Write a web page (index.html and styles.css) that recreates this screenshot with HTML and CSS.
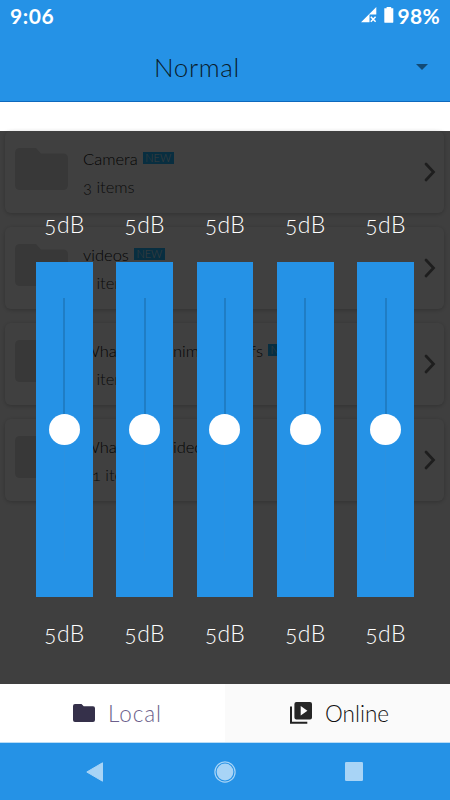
FILE: index.html
```html
<!DOCTYPE html>
<html lang="en">
<head>
  <meta charset="UTF-8">
  <title>Equalizer</title>
  <link rel="stylesheet" href="styles.css">
</head>
<body>
  <div class="screen">
    <header class="header">
      <div class="status-bar">
        <span class="clock">9:06</span>
        <svg class="signal" width="16" height="16" viewBox="0 0 16 16">
          <path d="M0 15.3L15.3 0V7.5H8.5V15.3Z" fill="#fff"/>
          <path d="M9.8 9.7L14.6 14.7M14.6 9.7L9.8 14.7" stroke="#fff" stroke-width="1.5"/>
        </svg>
        <svg class="battery" width="10" height="16" viewBox="0 0 10 16">
          <path d="M2.6 0H7.2V1.3H9.3V14.9Q9.3 15.8 8.4 15.8H1.2Q.3 15.8 .3 14.9V1.3H2.6Z" fill="#fff"/>
        </svg>
        <span class="percent">98%</span>
      </div>
      <div class="preset">
        <span class="preset-name">Normal</span>
        <span class="arrow-down"></span>
      </div>
    </header>

    <div class="strip"></div>

    <main class="content">
      <div class="folder-list">
        <div class="card">
          <svg class="folder" width="53" height="43" viewBox="0 0 53 43"><path d="M5 0H21L26 5.5H48Q53 5.5 53 10.5V37Q53 42 48 42H5Q0 42 0 37V5Q0 0 5 0Z"/></svg>
          <div class="info">
            <div class="title"><span class="name">Camera</span><span class="badge">NEW</span></div>
            <div class="count">3 items</div>
          </div>
          <svg class="chevron" width="12" height="20" viewBox="0 0 12 20"><path d="M2 2L9.5 10L2 18"/></svg>
        </div>
        <div class="card">
          <svg class="folder" width="53" height="43" viewBox="0 0 53 43"><path d="M5 0H21L26 5.5H48Q53 5.5 53 10.5V37Q53 42 48 42H5Q0 42 0 37V5Q0 0 5 0Z"/></svg>
          <div class="info">
            <div class="title"><span class="name">videos</span><span class="badge">NEW</span></div>
            <div class="count">1 items</div>
          </div>
          <svg class="chevron" width="12" height="20" viewBox="0 0 12 20"><path d="M2 2L9.5 10L2 18"/></svg>
        </div>
        <div class="card">
          <svg class="folder" width="53" height="43" viewBox="0 0 53 43"><path d="M5 0H21L26 5.5H48Q53 5.5 53 10.5V37Q53 42 48 42H5Q0 42 0 37V5Q0 0 5 0Z"/></svg>
          <div class="info">
            <div class="title"><span class="name">WhatsApp Animated Gifs</span><span class="badge">NEW</span></div>
            <div class="count">1 items</div>
          </div>
          <svg class="chevron" width="12" height="20" viewBox="0 0 12 20"><path d="M2 2L9.5 10L2 18"/></svg>
        </div>
        <div class="card">
          <svg class="folder" width="53" height="43" viewBox="0 0 53 43"><path d="M5 0H21L26 5.5H48Q53 5.5 53 10.5V37Q53 42 48 42H5Q0 42 0 37V5Q0 0 5 0Z"/></svg>
          <div class="info">
            <div class="title"><span class="name">WhatsApp Video</span><span class="badge">NEW</span></div>
            <div class="count">11 items</div>
          </div>
          <svg class="chevron" width="12" height="20" viewBox="0 0 12 20"><path d="M2 2L9.5 10L2 18"/></svg>
        </div>
      </div>

      <!-- equalizer over the folder list -->
      <div class="equalizer">
        <div class="band">
          <span class="db">5dB</span>
          <div class="slider"><div class="track"></div><div class="knob"></div><div class="track-low"></div></div>
          <span class="db">5dB</span>
        </div>
        <div class="band">
          <span class="db">5dB</span>
          <div class="slider"><div class="track"></div><div class="knob"></div><div class="track-low"></div></div>
          <span class="db">5dB</span>
        </div>
        <div class="band">
          <span class="db">5dB</span>
          <div class="slider"><div class="track"></div><div class="knob"></div><div class="track-low"></div></div>
          <span class="db">5dB</span>
        </div>
        <div class="band">
          <span class="db">5dB</span>
          <div class="slider"><div class="track"></div><div class="knob"></div><div class="track-low"></div></div>
          <span class="db">5dB</span>
        </div>
        <div class="band">
          <span class="db">5dB</span>
          <div class="slider"><div class="track"></div><div class="knob"></div><div class="track-low"></div></div>
          <span class="db">5dB</span>
        </div>
      </div>
    </main>

    <div class="tabs">
      <div class="tab tab-local">
        <svg width="22" height="18" viewBox="0 0 22 18"><path d="M2 0H8.5L10.7 2.2H20Q22 2.2 22 4.2V16Q22 18 20 18H2Q0 18 0 16V2Q0 0 2 0Z" fill="#35304a"/></svg>
        <span>Local</span>
      </div>
      <div class="tab tab-online">
        <svg width="22" height="22" viewBox="0 0 22 22">
          <path d="M1 4.5V20.8H17.3" fill="none" stroke="#222" stroke-width="2"/>
          <path d="M6.4 0H20Q22 0 22 2V15.4Q22 17.4 20 17.4H6.4Q4.4 17.4 4.4 15.4V2Q4.4 0 6.4 0ZM10.7 3.9V13.6L17.4 8.7Z" fill="#262626" fill-rule="evenodd"/>
        </svg>
        <span>Online</span>
      </div>
    </div>

    <nav class="nav-bar">
      <svg width="18" height="20" viewBox="0 0 18 20"><path d="M16.5 .8V19.2L.8 10Z" fill="#a8d4f6" stroke="#a8d4f6" stroke-linejoin="round"/></svg>
      <svg width="22" height="22" viewBox="0 0 22 22"><circle cx="11" cy="11" r="10.1" fill="none" stroke="#a8d4f6" stroke-width="1.2"/><circle cx="11" cy="11" r="8.4" fill="#a8d4f6"/></svg>
      <svg width="18" height="19" viewBox="0 0 18 19"><rect width="18" height="19" rx="1.3" fill="#a8d4f6"/></svg>
    </nav>
  </div>
</body>
</html>
```

FILE: styles.css
```css
* {
  box-sizing: border-box;
}

body {
  margin: 0;
  font-family: Lato, "Open Sans", sans-serif;
  font-weight: 300;
  font-variant-numeric: oldstyle-nums;
}

.screen {
  width: 450px;
  height: 800px;
  display: flex;
  flex-direction: column;
  overflow: hidden;
  background: #fff;
}

.header {
  height: 102px;
  background: #2592e6;
  border-bottom: 1px solid #0e69bd;
}

.status-bar {
  height: 32px;
  padding: 0 10px;
  display: flex;
  align-items: center;
  color: #fff;
  font-size: 21px;
  font-weight: 700;
  font-variant-numeric: lining-nums;
}

.clock {
  margin-right: auto;
  margin-bottom: 2px;
  letter-spacing: 0.6px;
}

.signal {
  margin: 0 7px 2px 0;
}

.battery {
  margin: 0 4px 3px 0;
}

.percent {
  margin-bottom: 2px;
  letter-spacing: 0.3px;
}

.preset {
  height: 69px;
  padding: 1px 22px 0 154px;
  display: flex;
  align-items: center;
  justify-content: space-between;
}

.preset-name {
  font-size: 26px;
  color: #0a1c2c;
  letter-spacing: 0.6px;
}

.arrow-down {
  border: 6px solid transparent;
  border-top-color: #124a75;
  border-bottom: 0;
}

.strip {
  height: 29px;
}

.content {
  position: relative;
  height: 553px;
  background: #fafafa;
}

.folder-list {
  padding: 0 6px 0 5px;
  display: flex;
  flex-direction: column;
  gap: 14px;
}

.card {
  height: 82px;
  padding: 0 8px 0 10px;
  display: flex;
  align-items: center;
  background: #fff;
  border-radius: 6px;
  box-shadow: 0 1px 4px rgba(0,0,0,0.22);
}

.folder {
  fill: #dedede;
  margin-bottom: 6px;
}

.info {
  flex: 1;
  margin-left: 15px;
  padding-top: 2px;
  font-size: 16.5px;
}

.title {
  display: flex;
  align-items: center;
  height: 29px;
  color: #111;
}

.badge {
  width: 31px;
  height: 12px;
  margin: 0 0 2px 5px;
  background: #20b8ff;
  color: #f0f0f0;
  font-size: 11px;
  line-height: 12px;
  text-align: center;
}

.count {
  height: 29px;
  line-height: 29px;
  color: #333;
}

.chevron {
  fill: none;
  stroke: #777;
  stroke-width: 2.8;
  stroke-linecap: round;
}

.equalizer {
  position: absolute;
  inset: 0;
  display: flex;
  gap: 23.5px;
  padding: 77px 36px 0;
  background: rgba(0,0,0,0.75);
}

.band {
  flex: 1;
  display: flex;
  flex-direction: column;
  align-items: center;
}

.db {
  height: 32px;
  line-height: 32px;
  font-size: 23px;
  letter-spacing: 0.4px;
  color: #fff;
}

.slider {
  width: 100%;
  height: 335px;
  margin: 22px 0 20px;
  padding-top: 36px;
  display: flex;
  flex-direction: column;
  align-items: center;
  background: #2592e6;
}

.track {
  width: 2px;
  height: 115.5px;
  background: #1f7dc5;
}

.knob {
  width: 31px;
  height: 31px;
  border-radius: 50%;
  background: #fff;
}

.track-low {
  width: 1px;
  height: 116px;
  background: #2b91e0;
}

.tabs {
  height: 59px;
  display: flex;
  border-bottom: 1px solid #b9dcf6;
}

.tab {
  width: 50%;
  display: flex;
  align-items: center;
  font-size: 22.5px;
}

.tab-local {
  padding-left: 73px;
  gap: 13px;
  color: #6c5f8c;
  letter-spacing: 0.9px;
}

.tab-online {
  padding-left: 65px;
  gap: 13px;
  background: #fafafa;
  color: #111;
}

.nav-bar {
  flex: 1;
  display: flex;
  align-items: center;
  justify-content: space-between;
  padding: 0 87px 0 86px;
  background: #2592e6;
}
```
